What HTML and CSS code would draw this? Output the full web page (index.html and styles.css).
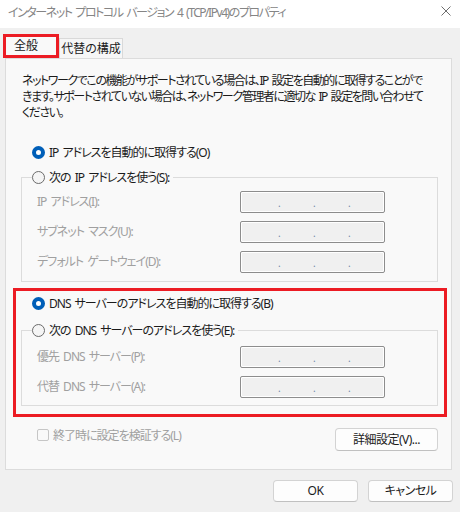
FILE: index.html
```
<!DOCTYPE html>
<html lang="ja">
<head>
  <meta charset="UTF-8">
  <title>インターネット プロトコル バージョン 4 (TCP/IPv4)のプロパティ</title>
  <link rel="stylesheet" href="styles.css">
</head>
<body>
  <div class="dialog">
    <div class="titlebar">
      <span class="title">インターネット プロトコル バージョン 4 (TCP/IPv4)のプロパティ</span>
      <svg class="close" width="10" height="10" viewBox="0 0 10 10">
        <path d="M0.5 0.5 L9.5 9.5 M9.5 0.5 L0.5 9.5" stroke="#6e6e6e" stroke-width="1" fill="none"/>
      </svg>
    </div>

    <div class="tabs">
      <div class="tab tab-active">全般</div>
      <div class="tab">代替の構成</div>
    </div>

    <div class="panel">
      <p class="desc">ネットワークでこの機能がサポートされている場合は、IP 設定を自動的に取得することがで<br>きます。サポートされていない場合は、ネットワーク管理者に適切な IP 設定を問い合わせて<br>ください。</p>

      <div class="radio-row first">
        <span class="radio checked"></span>
        <span>IP アドレスを自動的に取得する(O)</span>
      </div>

      <fieldset class="group group-ip">
        <legend class="radio-row">
          <span class="radio"></span>
          <span>次の IP アドレスを使う(S):</span>
        </legend>
        <div class="fields">
          <label>IP アドレス(I):</label>
          <div class="ip-box"><span>.</span><span>.</span><span>.</span></div>
          <label>サブネット マスク(U):</label>
          <div class="ip-box"><span>.</span><span>.</span><span>.</span></div>
          <label>デフォルト ゲートウェイ(D):</label>
          <div class="ip-box"><span>.</span><span>.</span><span>.</span></div>
        </div>
      </fieldset>

      <div class="highlight">
        <div class="radio-row">
          <span class="radio checked"></span>
          <span>DNS サーバーのアドレスを自動的に取得する(B)</span>
        </div>
        <fieldset class="group group-dns">
          <legend class="radio-row">
            <span class="radio"></span>
            <span>次の DNS サーバーのアドレスを使う(E):</span>
          </legend>
          <div class="fields">
            <label>優先 DNS サーバー(P):</label>
            <div class="ip-box"><span>.</span><span>.</span><span>.</span></div>
            <label>代替 DNS サーバー(A):</label>
            <div class="ip-box"><span>.</span><span>.</span><span>.</span></div>
          </div>
        </fieldset>
      </div>

      <div class="bottom-row">
        <div class="check-row">
          <span class="checkbox"></span>
          <span>終了時に設定を検証する(L)</span>
        </div>
        <button class="btn btn-advanced">詳細設定(V)...</button>
      </div>
    </div>

    <div class="footer">
      <button class="btn">OK</button>
      <button class="btn">キャンセル</button>
    </div>
  </div>
</body>
</html>
```
FILE: styles.css
```
body {
  margin: 0;
  padding: 0;
  background-color: #f0f0f0;
  font-family: "Noto Sans", "Noto Sans CJK JP", sans-serif;
  font-size: 12px;
  color: #1b1b1b;
  font-feature-settings: "palt";
  letter-spacing: -1px;
  word-spacing: 2px;
}
.dialog {
  width: 460px;
  height: 512px;
  overflow: hidden;
}
.titlebar {
  height: 28px;
  background: #fff;
  display: flex;
  align-items: center;
  justify-content: space-between;
  padding: 0 9px 2px 8px;
  box-sizing: border-box;
}
.title {
  color: #858585;
  line-height: 16px;
  letter-spacing: -1.45px;
}
.close {
  margin-top: -4px;
}
.tabs {
  display: flex;
  align-items: flex-end;
  margin: 6px 0 0 3px;
  height: 24px;
}
.tab {
  height: 20px;
  width: 64px;
  box-sizing: border-box;
  border: 1px solid #d9d9d9;
  border-bottom: none;
  background: #f6f6f6;
  text-align: center;
  line-height: 19px;
  letter-spacing: 0;
}
.tab-active {
  height: 24px;
  width: 56px;
  border: 3px solid #ec1c24; /* annotation box */
  background: #f9f9f9;
  text-align: left;
  padding-left: 8px;
  line-height: 18px;
}
.panel {
  margin: 0 8px 0 5px;
  background: #f9f9f9;
  border: 1px solid #dcdcdc;
  padding: 14px 13px 18px 15px;
}
.desc {
  margin: 0 0 0 1px;
  line-height: 16px;
  white-space: nowrap;
  letter-spacing: -1.45px;
}
.radio-row {
  display: flex;
  align-items: center;
  height: 22px;
  gap: 4px;
  padding-left: 11px;
}
.radio-row.first {
  margin-top: 20px;
}
.radio {
  width: 13px;
  height: 13px;
  box-sizing: border-box;
  border-radius: 50%;
  border: 1px solid #6b6b6b;
  background: #f5f5f5;
  flex-shrink: 0;
}
.radio.checked {
  border: 4px solid #005fb8;
  background: #fff;
}
.group {
  margin: 3px 0 0 0;
  border: 1px solid #dcdcdc;
  padding: 3px 0 8px 10px;
  min-width: 0;
}
.group legend.radio-row {
  padding: 0 4px 0 0;
  margin-left: 0;
}
.group-dns {
  margin-top: 5px;
  padding: 5px 0 7px 10px;
}
.fields {
  display: grid;
  grid-template-columns: 203px 145px;
  row-gap: 8px;
  padding-left: 5px;
  align-items: center;
}
.fields label {
  color: #a0a0a0;
  line-height: 22px;
}
.ip-box {
  height: 22px;
  box-sizing: border-box;
  border: 1px solid #8d8d8d;
  box-shadow: inset 0 0 0 1px #fff;
  border-radius: 2px;
  background: #f0f0f0;
  display: flex;
  padding-left: 37px;
  line-height: 22px;
  color: #6f87a8;
  font-size: 10px;
  letter-spacing: 0;
}
.ip-box span {
  width: 35px;
}
.highlight {
  margin: 6px -9px 0 -8px;
  border: 3px solid #ec1c24; /* annotation box */
  padding: 1px 6px 8px 5px;
}
.bottom-row {
  display: flex;
  align-items: center;
  justify-content: space-between;
  margin-top: 11px;
  padding-left: 16px;
}
.check-row {
  display: flex;
  align-items: center;
  gap: 4px;
  color: #a0a0a0;
  margin-top: -9px;
}
.checkbox {
  width: 12px;
  height: 12px;
  box-sizing: border-box;
  border: 1px solid #c6c6c6;
  border-radius: 2px;
  background: #f9f9f9;
}
.btn {
  font-family: inherit;
  font-size: 12px;
  font-feature-settings: "palt";
  letter-spacing: -0.5px;
  color: #1b1b1b;
  background: #fdfdfd;
  border: 1px solid #d3d3d3;
  border-bottom-color: #c0c0c0;
  border-radius: 4px;
  height: 22px;
  width: 85px;
  padding: 0;
  line-height: 18px;
}
.btn-advanced {
  width: 103px;
  height: 23px;
}
.footer {
  display: flex;
  justify-content: flex-end;
  gap: 10px;
  margin: 10px 7px 0 0;
}
```
